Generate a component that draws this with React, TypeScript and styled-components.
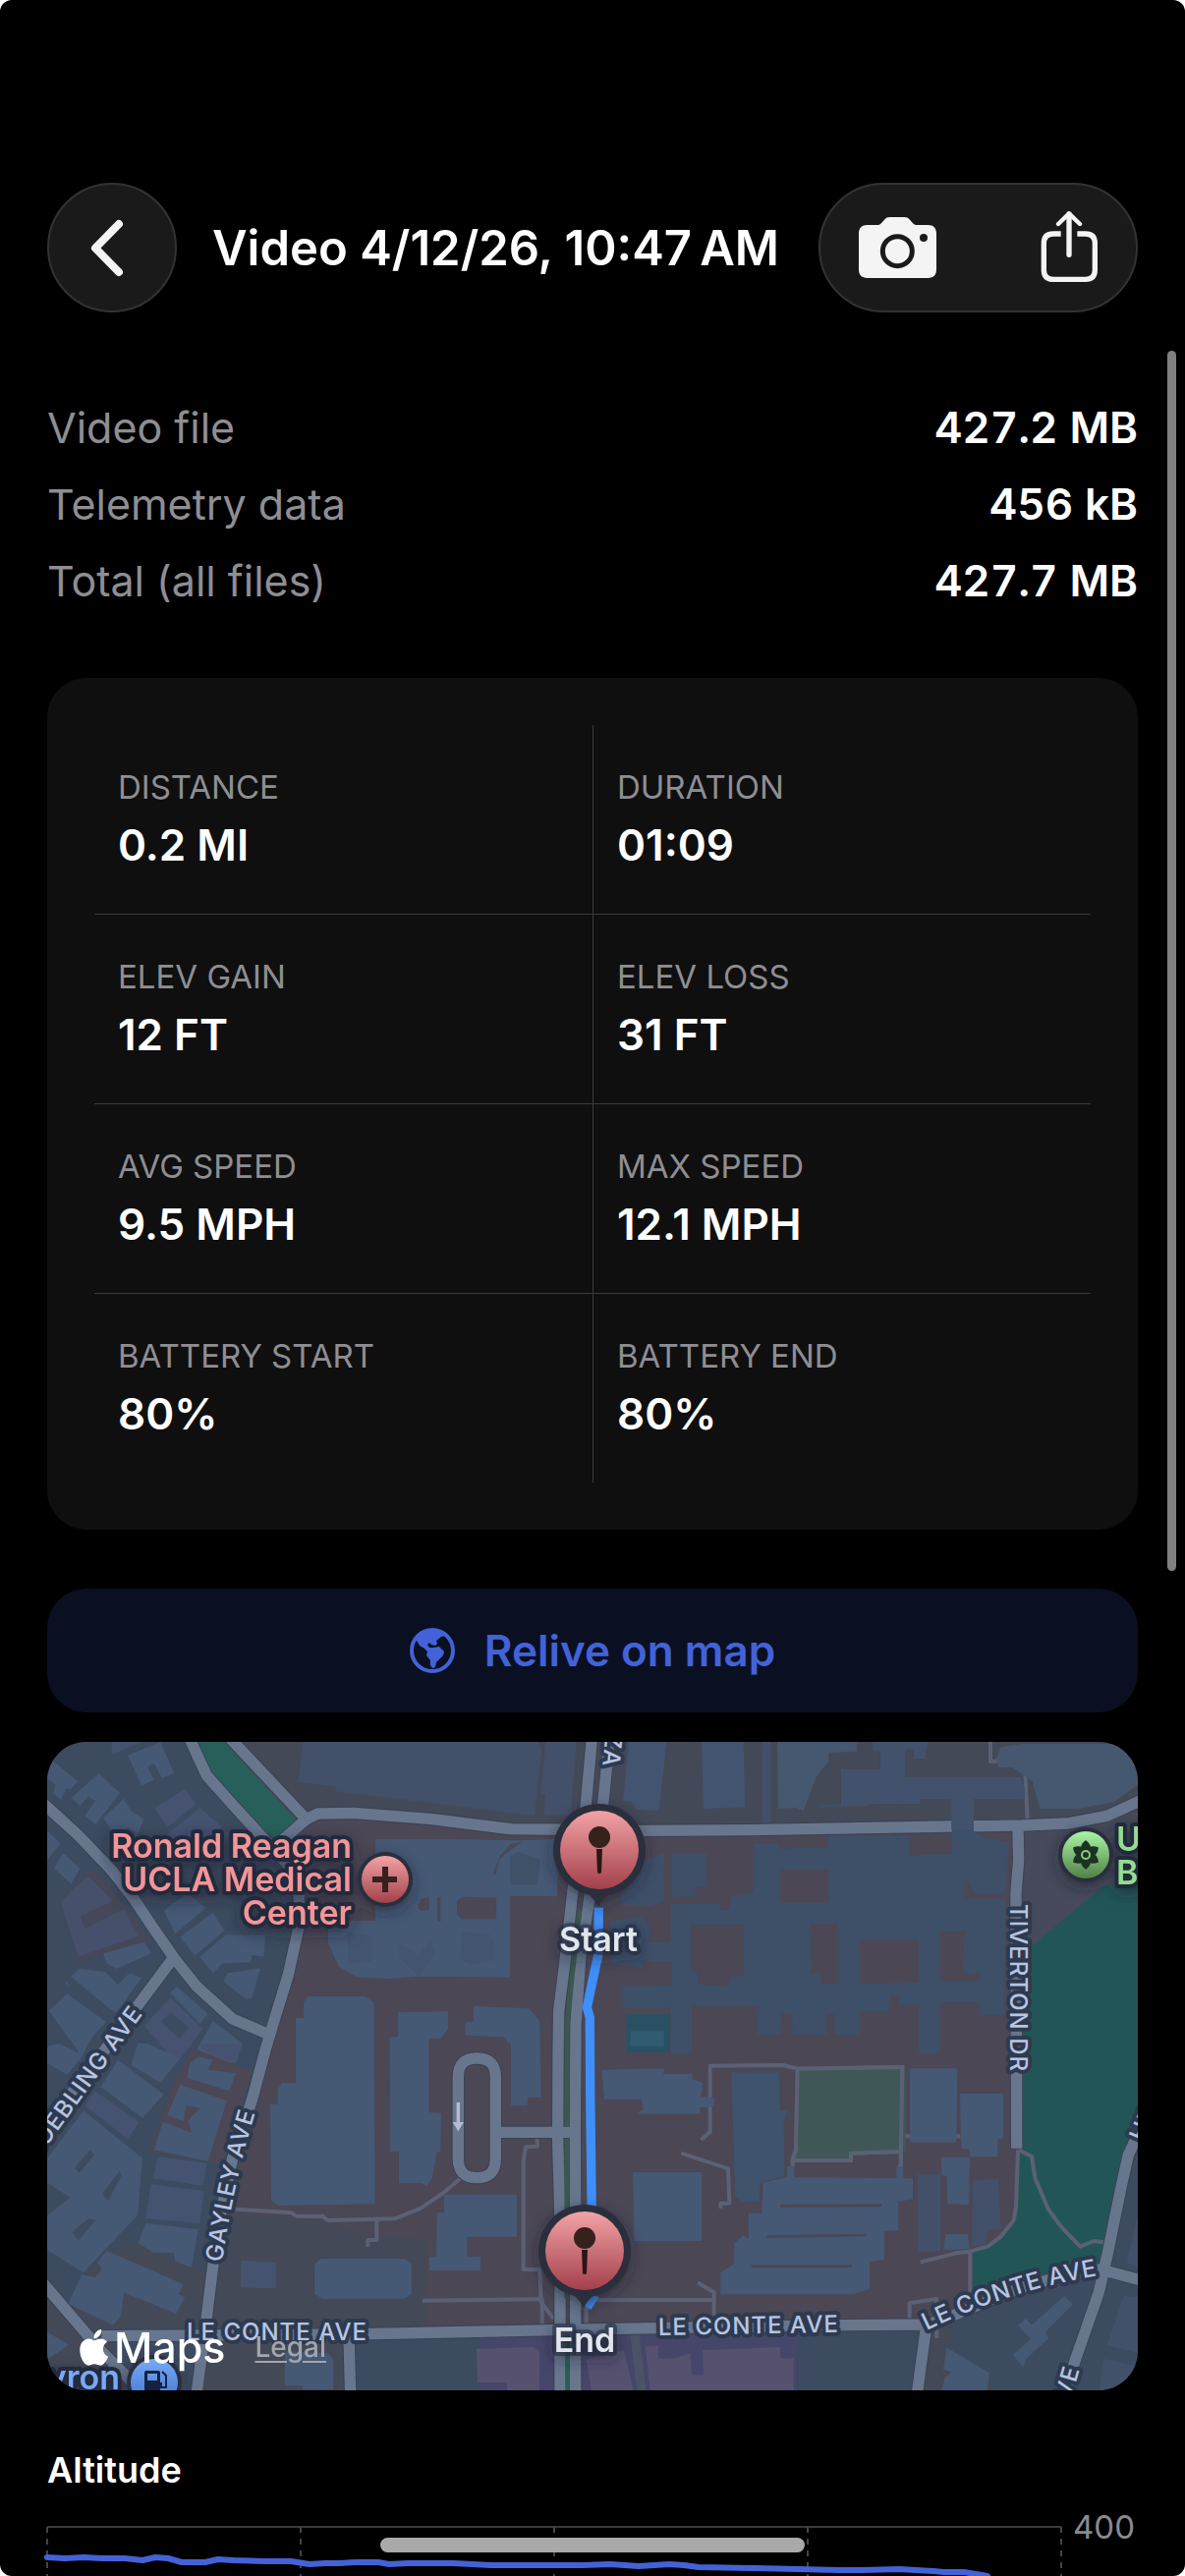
import React from "react";
import styled, { createGlobalStyle, css } from "styled-components";

const GlobalStyle = createGlobalStyle`
  *, *::before, *::after { box-sizing: border-box; }
  body {
    margin: 0;
    background: #fff;
    font-family: Inter, "Liberation Sans", sans-serif;
    color: #fff;
  }
`;

const Screen = styled.div`
  position: relative;
  height: 100vh;
  overflow: hidden;
  padding: 186px 48px 0;
  background: #000;
  border-radius: 12px;
`;

/* ---------- header ---------- */

const Header = styled.header`
  display: flex;
  align-items: center;
  margin-bottom: 78px;
`;

const glass = css`
  height: 132px;
  background: #1a1a1a;
  border: 2px solid #333335;
  border-radius: 66px;
`;

const BackButton = styled.button`
  ${glass}
  display: flex;
  align-items: center;
  justify-content: center;
  width: 132px;
  padding: 0;
  color: #f4f4f4;
`;

const Title = styled.h1`
  flex: 1;
  margin: 0;
  padding: 2px 4px 0 0;
  font-size: 49px;
  font-weight: 600;
  line-height: 60px;
  text-align: center;
  white-space: nowrap;
`;

const ActionGroup = styled.div`
  ${glass}
  display: flex;
  align-items: center;
  justify-content: space-between;
  width: 325px;
  padding: 0 39px;
`;

const IconButton = styled.button`
  display: flex;
  padding: 0;
  background: none;
  border: 0;
  color: #f4f4f4;
`;

/* ---------- file sizes ---------- */

const FileList = styled.dl`
  margin: 0 0 60px;
`;

const FileRow = styled.div`
  display: flex;
  align-items: center;
  justify-content: space-between;
  height: 78px;
  line-height: 56px;

  dt {
    color: #8e8e93;
    font-size: 43px;
  }

  dd {
    margin: 0;
    font-size: 44px;
    font-weight: 600;
    font-variant-numeric: tabular-nums;
  }
`;

/* ---------- stats ---------- */

const StatsCard = styled.section`
  margin-bottom: 60px;
  padding: 48px;
  background: #0f0f0f;
  border-radius: 40px;
`;

const StatsRow = styled.dl`
  display: grid;
  grid-template-columns: 1fr 1fr;
  margin: 0;

  & + & { border-top: 1px solid #3a3a3c; }
`;

const Stat = styled.div`
  display: flex;
  flex-direction: column;
  justify-content: center;
  gap: 12px;
  height: 192px;
  padding: 2px 24px 0;

  & + & { border-left: 1px solid #3a3a3c; }

  dt {
    color: #8e8e93;
    font-size: 33px;
    line-height: 38px;
  }

  dd {
    margin: 0;
    font-size: 44px;
    font-weight: 600;
    line-height: 56px;
  }
`;

/* ---------- relive ---------- */

const ReliveButton = styled.button`
  display: flex;
  align-items: center;
  justify-content: center;
  gap: 30px;
  width: 100%;
  height: 126px;
  margin-bottom: 30px;
  background: #0a1022;
  border: 0;
  border-radius: 40px;
  color: #4362d8;
  font-family: inherit;
  font-size: 44px;
  font-weight: 600;
`;

/* ---------- map ---------- */

const MapCard = styled.section`
  position: relative;
  height: 660px;
  margin-bottom: 57px;
  overflow: hidden;
  background: #4b4755;
  border-radius: 40px;
`;

const MapCanvas = styled.svg`
  display: block;
  width: 100%;
  height: 100%;
`;

const StreetName = styled.text`
  fill: #b8c4e2;
  stroke: #2d3a4f;
  stroke-width: 8px;
  stroke-linejoin: round;
  paint-order: stroke;
  font-size: 24px;
  font-weight: 500;
  letter-spacing: 1px;
`;

const PlaceName = styled.text<{ $color: string }>`
  fill: ${(p) => p.$color};
  stroke: #222b3d;
  stroke-width: 8px;
  stroke-linejoin: round;
  paint-order: stroke;
  font-size: 34px;
  font-weight: 600;
`;

const Attribution = styled.div`
  position: absolute;
  left: 33px;
  bottom: 18px;
  display: flex;
  align-items: center;
  gap: 6px;
`;

const MapsBrand = styled.span`
  margin-right: 24px;
  font-size: 43px;
  font-weight: 500;
  line-height: 52px;
`;

const LegalLink = styled.a`
  color: #a3a6ae;
  font-size: 28px;
  font-weight: 500;
  line-height: 32px;
  text-decoration: underline;
  text-underline-offset: 4px;
`;

/* ---------- altitude ---------- */

const SectionTitle = styled.h2`
  margin: 0 0 14px;
  font-size: 36px;
  font-weight: 600;
  line-height: 48px;
`;

const Chart = styled.div`
  display: grid;
  grid-template-columns: 1fr 78px;
`;

const Plot = styled.svg`
  display: block;
  width: 100%;
  overflow: visible;
`;

const AxisLabel = styled.span`
  padding-left: 12px;
  color: #8a8a8e;
  font-size: 33px;
  line-height: 40px;
`;

/* ---------- system overlays ---------- */

const ScrollThumb = styled.div`
  position: absolute;
  top: 357px;
  right: 9px;
  width: 9px;
  height: 1242px;
  background: #808080;
  border-radius: 5px;
`;

const HomeIndicator = styled.div`
  position: absolute;
  left: 50%;
  bottom: 24px;
  width: 432px;
  height: 15px;
  background: #a9a9a9;
  border-radius: 8px;
  transform: translateX(-50%);
`;

/* ---------- icons ---------- */

const ChevronLeft = () => (
  <svg width="128" height="128" viewBox="2 2 128 128" aria-hidden="true">
    <path d="M73 42 49 66.500l24 24.500" fill="none" stroke="currentColor" strokeWidth="8" strokeLinecap="round" strokeLinejoin="round" />
  </svg>
);

const Camera = () => (
  <svg width="79" height="62" viewBox="132 123 237 186" aria-hidden="true">
    <path
      fill="currentColor"
      d="M158 147h30c6 0 10-2 14-7l8-9c5-6 9-8 17-8h44c8 0 12 2 17 8l8 9c4 5 8 7 14 7h33c17 0 26 9 26 26v110c0 17-9 26-26 26H158c-17 0-26-9-26-26V173c0-17 9-26 26-26Z"
    />
    <circle cx="250" cy="227" r="45" fill="none" stroke="#1a1a1a" strokeWidth="15" />
    <circle cx="330" cy="186" r="12" fill="#1a1a1a" />
  </svg>
);

const Share = () => (
  <svg width="58" height="74" viewBox="686 105 174 222" aria-hidden="true">
    <g fill="none" stroke="currentColor" strokeWidth="16">
      <path d="M748 174h-23c-20 0-29 10-29 29v81c0 19 9 29 29 29h98c20 0 29-10 29-29v-81c0-19-9-29-29-29h-25" />
      <path d="M773 238V114" strokeLinecap="round" />
      <path d="m740 144 33-32 33 32" strokeWidth="13" strokeLinecap="round" strokeLinejoin="round" />
    </g>
  </svg>
);

const Globe = () => (
  <svg width="46" height="46" viewBox="0 0 46 46" aria-hidden="true">
    <circle cx="23" cy="23" r="21" fill="none" stroke="currentColor" strokeWidth="4" />
    <path
      fill="currentColor"
      d="M6 11 14 4 23 2l8 1 5 5-4 1-5 4 1 3-2 2-4-1-2-2-2 2 2 3 4 0 6-1 5 5-1 4-4 4-3 3-1 5-3 1-2-3 0-5-4-5 1-4-3-3-5-3Z"
    />
  </svg>
);

const AppleLogo = () => (
  <svg width="29" height="37" viewBox="122 850 87 113" aria-hidden="true">
    <path
      fill="#fff"
      d="M189 850c2 14-9 28-23 28-2-13 9-27 23-28Zm-22 34c6 0 12-5 21-5 8 0 15 4 19 10-19 12-16 38 3 46-6 15-16 27-24 27-7 0-10-4-19-4-8 0-11 4-18 4-13 0-27-25-27-48 0-23 14-35 28-35 8 0 13 5 17 5Z"
    />
  </svg>
);

/* ---------- map artwork ---------- */

const GROUND = "#4b4755";
const GREY = "#444957";
const BLOCK = "#3c4b60";
const HOUSE = "#455874";

/* Drawing units are a third of a pixel; tiles are offset inside that space. */
type Tile = { x: number; y: number; shapes: [string, string[]][] };

const regions: [string, string][] = [
  [GREY, "560,30 3360,30 3360,260 2988,300 1560,306 1200,275 960,256 820,270"],
  ["#464a5b", "3000,300 3360,250 3360,500 3005,720"],
  [BLOCK, "24,30 455,39 590,230 760,400 800,500 790,620 650,1130 550,1500 500,1840 24,1840"],
  [GREY, "540,1480 850,1500 990,1540 1180,1560 1180,1840 500,1850"],
  [GREY, "24,1740 310,2020 24,2020"],
  [BLOCK, "190,1850 500,1850 480,2020 310,2020"],
  [GREY, "500,1850 950,1850 950,2020 480,2020"],
  [BLOCK, "950,1850 1345,1845 1345,2020 950,2020"],
  ["#45466a", "1345,1845 2315,1835 2315,2020 1345,2020"],
  [BLOCK, "2315,1835 2700,1820 2690,2020 2315,2020"],
  [GREY, "2700,1830 2850,1780 2920,2020 2680,2020"],
  [BLOCK, "2790,1800 3240,1660 3140,2020 2920,2020 2880,1960 2780,1890"],
  [BLOCK, "3235,1680 3360,1690 3360,2020 3140,2020"],
  [BLOCK, "3360,1250 3262,1650 3360,1680"],
  ["#225656", "3255,478 3360,478 3360,1200 3310,1380 3260,1620 3250,1650 3100,1680 2850,1740 2850,1590 2895,1570 2935,1550 2975,1500 2990,1380 2990,1290 3005,1290 3005,670 3040,655 3170,545"],
  ["#27605b", "475,30 555,30 785,278 722,336 690,315 590,205 525,130"],
];

const tiles: Tile[] = [
  {
    x: 0,
    y: 0,
    shapes: [
      ["#444859", ["155,420 250,520 345,650 120,712 62,535"]],
      ["#47506a", ["150,450 225,525 125,570 140,610 258,550 302,632 118,695 66,530 95,495"]],
      [HOUSE, [
        "40,95 118,160 95,185 85,180 65,215 42,195 50,170 24,150 24,95",
        "182,135 246,195 172,292 138,265 170,220 150,205 125,235 98,210",
        "258,212 280,250 320,275 300,320 270,300 240,340 196,270",
        "270,80 370,39 412,135 375,150 350,105 330,115 350,155 312,172",
        "24,310 65,350 24,400",
        "72,378 125,425 97,473 45,425",
        "195,685 320,650 342,685 235,732 205,715",
        "380,555 450,500 510,545 415,625",
        "430,635 530,560 565,615 475,692",
        "570,628 690,630 685,695 650,690 645,712 560,715 530,745 490,695",
        "575,745 675,730 650,820 630,825 562,770",
        "120,732 200,740 240,780 275,745 312,760 235,865 78,775",
        "85,808 205,895 165,935 130,1000 30,860",
        "420,785 515,870 490,900 400,805",
        "530,890 620,960 600,1020 560,1015 480,980",
        "820,816 995,816 1022,835 1025,1450 730,1455 708,1440 705,1145 728,1145 728,1100 740,1080 783,1080 783,882 807,882 807,835",
      ]],
      ["#465270", ["220,39 310,39 222,78", "445,180 478,230 390,300 352,240", "490,240 560,300 430,390 380,330", "320,905 400,820 500,915 420,1020"]],
      [BLOCK, ["372,895 400,865 458,912 428,945", "78,768 90,750 210,850 190,870"]],
      ["#435069", ["805,39 1520,39 1535,65 1512,265 1200,226 905,190 905,175 790,162"]],
      ["#435069", ["1545,39 1640,39 1622,265 1540,262 1545,200 1530,200"]],
      [HOUSE, [
        "1026,336 1285,336 1470,340 1582,335 1582,510 1437,510 1437,758 1160,755 1070,762 970,758 915,725 882,655 882,585 1026,585",
        "1095,865 1248,862 1248,915 1225,945 1190,945 1190,1170 1227,1172 1225,1290 1213,1292 1200,1370 1182,1397 1168,1386 1098,1386 1098,1290 1072,1290 1070,940 1095,940",
        "1325,846 1495,853 1528,890 1532,1125 1490,1125 1490,1150 1440,1150 1440,965 1415,940 1300,935 1300,895 1325,893",
        "860,1617 1115,1617 1137,1632 1137,1725 1115,1739 865,1739 840,1725 840,1635",
      ]],
      [GROUND, ["1275,525 1295,512 1395,515 1395,580 1290,580 1275,565", "1384,443 1408,385 1440,350 1475,345 1430,375 1404,400 1394,443", "1155,545 1165,520 1190,512 1190,552 1165,555", "1215,512 1225,512 1225,588 1215,588"]],
      ["#3f5069", ["1437,390 1460,375 1530,400 1520,475 1437,475"]],
      ["#43546e", ["1290,620 1370,625 1388,645 1388,705 1320,718 1288,705", "940,620 1012,630 1012,710 945,715", "1100,655 1155,690 1195,645 1210,680 1160,755 1100,700"]],
    ],
  },
  {
    x: 1020,
    y: 0,
    shapes: [
      ["#435470", ["780,39 895,39 872,250 805,245 788,222 762,218", "1002,39 1130,39 1135,238 1008,243"]],
      ["#3e4f68", [
        "830,400 887,378 887,525 850,540 752,540 760,500",
        "912,378 1018,378 1018,480 980,482 980,512 912,513",
      ]],
      ["#2a5163", ["772,870 905,870 905,987 772,987"]],
      ["#305c73", ["785,922 887,922 887,968 785,968"]],
    ],
  },
  {
    x: 2160,
    y: 0,
    shapes: [
      ["#45586f", ["93,39 336,39 336,68 250,72 250,97 213,145 173,250 150,240 96,243", "775,55 838,45 1194,45 1194,170 1120,222 1015,243 895,243 872,160 812,117 768,117 762,90"]],
      ["#435069", ["47,39 73,39 73,285 47,285"]],
    ],
  },
  {
    x: 0,
    y: 960,
    shapes: [
      [GROUND, ["470,15 650,85 560,370 335,330 415,110"]],
      [GREY, ["205,632 300,610 510,700 480,870 160,870 90,790 135,700"]],
      [HOUSE, [
        "485,40 530,50 515,80 600,90 580,145 450,105 460,60",
        "430,125 573,175 515,360 350,325 378,238 465,272 445,240 390,220",
        "240,50 380,155 315,228 188,132",
        "135,205 315,350 300,525 200,630 135,700 24,630 24,525 95,470 24,425 24,350",
        "205,632 440,735 425,765 445,775 418,825 258,760 250,830 225,860 88,795 130,705 170,715 190,690 178,670",
        "325,548 485,568 465,685 415,665 410,640 348,638 302,610",
        "300,0 330,0 430,45 370,120 280,65",
        "24,10 60,0 135,35 85,95 24,60",
        "24,880 90,920 24,965",
        "750,940 880,945 898,965 898,1056 804,1056 804,1045 750,1045",
      ]],
      ["#455370", ["360,345 512,365 500,435 348,412", "340,430 503,450 490,550 325,535", "170,145 305,240 270,292 140,190", "615,663 723,668 723,748 615,745", "490,0 615,0 600,60 500,20"]],
      [GROUND, ["448,188 490,198 455,235 465,272 378,238 385,230 440,240"]],
      [BLOCK, ["155,325 168,340 122,395 108,380", "245,390 250,405 210,480 192,458", "150,535 172,540 120,600 100,575"]],
    ],
  },
  {
    x: 1020,
    y: 960,
    shapes: [
      [HOUSE, [
        "697,80 890,76 885,93 975,93 972,107 1007,120 1000,162 1040,165 1040,193 997,195 998,215 802,215 825,200 818,170 705,170",
        "792,393 1002,393 1002,603 796,603",
        "216,461 438,461 438,590 286,590 286,651 327,651 327,693 170,693 170,651 191,651 195,516 216,516",
      ]],
      ["#3f536c", ["1092,88 1238,88 1242,205 1265,205 1253,240 1255,405 1180,425 1178,483 1125,483 1105,465"]],
      ["#55516f", [
        "392,930 490,927 507,940 507,1060 408,1060 408,1035 318,1035 315,932",
        "650,965 765,935 795,1060 665,1060",
        "830,925 870,922 870,962 925,960 967,945 972,1012 1008,1012 1005,937 1242,927 1242,960 1283,962 1283,1060 845,1060",
      ]],
    ],
  },
  {
    x: 2160,
    y: 960,
    shapes: [
      ["#3f5857", ["155,77 485,77 485,330 318,335 318,357 148,352 155,300"]],
      [HOUSE, [
        "50,425 120,408 507,412 507,475 463,483 463,570 420,573 420,660 375,667 375,750 325,766 -80,766 -80,700 -38,672 -38,610 -10,585 5,597 5,518 45,518",
        "498,76 643,76 640,302 498,302",
        "651,153 784,153 784,290 767,292 765,346 680,346 680,322 655,322",
        "593,347 681,347 678,492 613,490 610,405 595,402",
        "607,582 675,582 680,628 600,630",
        "123,375 145,375 145,410 123,410",
        "457,372 478,372 478,414 457,414",
        "610,928 740,1005 735,1060 595,1060 605,1020 625,1003 600,995",
        "970,770 995,797 912,880 922,900 850,965 845,990 812,950 868,902 827,860 852,840 870,860",
      ]],
      ["#435069", ["522,400 592,400 592,635 522,635", "690,417 768,413 776,568 732,570 730,618 688,618", "1150,770 1194,775 1194,945 1100,922", "1090,962 1194,985 1194,1060 1075,1060", "1194,520 1194,680 1160,670"]],
      [GROUND, ["103,491 411,490 411,499 103,501", "60,586 365,581 365,589 60,594", "14,676 320,676 320,684 14,684"]],
    ],
  },
];

const campusBuilding =
  "1745,585 1840,572 1863,600 1860,650 1928,652 1928,533 2077,533 2080,552 2102,555 2115,510 2180,498 2180,350 2258,350 2260,365 2410,360 2410,325 2655,325 2655,385 2787,382 2785,230 2688,213 2530,230 2520,230 2390,230 2370,240 2448,240 2448,123 2568,123 2568,68 2545,62 2545,39 2713,39 2705,90 2670,90 2670,62 2643,62 2643,147 2995,147 3008,180 3008,213 2853,213 2853,310 2880,330 2960,345 2948,502 2855,502 2825,450 2825,518 2950,518 2945,873 2870,873 2870,833 2750,833 2750,993 2685,993 2685,842 2625,842 2625,817 2597,817 2597,862 2506,862 2506,933 2430,933 2428,870 2405,870 2403,933 2300,933 2298,870 2265,870 2263,933 2190,933 2195,845 1992,845 1992,993 1928,993 1928,850 1780,850 1780,785 1930,783 1930,710 1840,710 1840,730 1745,715";

const courtyards = [
  "2262,430 2410,430 2410,530 2262,530",
  "2353,595 2438,595 2438,778 2388,778 2388,745 2358,745",
  "2506,643 2685,643 2685,773 2506,778",
  "2750,618 2832,618 2822,645 2820,745 2870,748 2870,770 2750,770",
  "1990,598 2150,598 2150,753 2105,755 2105,785 2010,778 2010,738 1990,738",
];

const roads = [
  "M10 225 120 325 220 430 290 520 350 610 412 700 480 785 590 885 695 930",
  "M408 700 300 845 200 980 100 1110 10 1240",
  "M455 20 510 140 590 230 690 340 765 420 793 500 793 600 760 750 720 880 690 980 650 1130 590 1310 550 1500 530 1640 508 1820 480 2030",
  "M575 20 815 275 735 345",
  "M810 278 850 258 960 256 1200 275 1440 305 1560 306 1850 310 2160 308 2784 297 3000 294 3140 288 3260 265 3370 215",
  "M1688 20 1668 240 1628 500 1606 700 1586 860 1584 1000 1583 1260 1590 1500 1590 2030",
  "M1742 20 1722 220 1682 500 1652 700 1638 900 1636 1230 1637 1500 1637 2030",
  "M190 1853 950 1848 1570 1835 1880 1829 2460 1820 2715 1818 2790 1790 3000 1705 3150 1662 3230 1650 3260 1655 3370 1685",
  "M2707 1830 2680 2030",
  "M3360 1225 3325 1300 3305 1390 3262 1600 3235 1720 3165 1920 3130 2030",
  "M2988 300 2990 400 2982 500 2984 1280",
  "M945 1850 950 2030",
  "M10 1690 190 1900 270 1980 320 2040",
  "M1410 1231 1640 1231",
];

const oval = "M1279 1062c0-40 20-57 57-57s57 17 57 57v250c0 40-20 58-57 58s-57-18-57-58Z";

const footpaths = [
  "M585 1465 770 1477 785 1487 865 1487 880 1500 1085 1495 1165 1463 1235 1415 1290 1368",
  "M1030 1500V1560H1003V1580",
  "M1520 1250V1274L1485 1276 1478 1320V1650H1528L1532 1750 1570 1800",
  "M1170 1745 1528 1741M1535 1740V1830M1670 1740V1830M1700 1743H2060M2010 1690 2060 1720V1790",
  "M2020 1255 2048 1230V1028L2270 1026 2315 1037 2635 1032 2630 1335M2315 1037 2310 1285 2300 1310V1335M2300 1317H2478V1295L2630 1290",
  "M1960 1295 2103 1342 2107 1448H2080V1463",
  "M2990 1285 3030 1305 3040 1370 3080 1465 3120 1520 3178 1580 3220 1563 3250 1567",
  "M2988 1285 2982 1460 2975 1500 2935 1550 2895 1580 2840 1595 2800 1600 2690 1628M2842 1600V1730M2657 1800V1753L2740 1740V1860",
  "M2904 30V98H2980L3010 125 3017 280",
  "M2635 1243H2660M2798 1243H2812",
];

const streets = [
  { id: "gayley", name: "GAYLEY AVE", d: "M178 530Q190 446 214 370" },
  { id: "conte-east", name: "LE CONTE AVE", d: "M895 599Q983 556 1082 541" },
];

const Pin = ({ x, y }: { x: number; y: number }) => (
  <g transform={`translate(${x} ${y})`}>
    <path d="M-22 39Q-6 46-1 58 4 46 22 39Z" fill="#2b2f3d" />
    <circle r="47" fill="#2b2f3d" />
    <circle r="40" fill="url(#pinRed)" />
    <circle cy="-13" r="11" fill="#35201f" />
    <path d="M-3-1H3L2 23Q0 25-2 23Z" fill="#2a1719" />
  </g>
);

const MapArt = () => (
  <MapCanvas viewBox="0 0 1110 660" preserveAspectRatio="xMidYMid slice" role="img" aria-label="Route map">
    <defs>
      <linearGradient id="pinRed" x1="0" y1="0" x2="0" y2="1">
        <stop offset="0" stopColor="#f2a3a5" />
        <stop offset="1" stopColor="#a3404b" />
      </linearGradient>
      <linearGradient id="pinGreen" x1="0" y1="0" x2="0" y2="1">
        <stop offset="0" stopColor="#aaf5a3" />
        <stop offset="1" stopColor="#4f8148" />
      </linearGradient>
      <linearGradient id="pinBlue" x1="0" y1="0" x2="0" y2="1">
        <stop offset="0" stopColor="#77a9f8" />
        <stop offset="1" stopColor="#4070cc" />
      </linearGradient>
      <filter id="shade" x="-50%" y="-50%" width="200%" height="200%">
        <feDropShadow dx="0" dy="5" stdDeviation="7" floodColor="#1d2230" floodOpacity="0.55" />
      </filter>
      {streets.map((s) => (
        <path key={s.id} id={s.id} d={s.d} />
      ))}
    </defs>

    <g transform="translate(-8 -13) scale(0.333333)">
      {regions.map(([fill, points], i) => (
        <polygon key={i} fill={fill} points={points} />
      ))}
      <g fill="none" strokeLinejoin="round" stroke="#5b6175" strokeWidth="12">
        {footpaths.map((d) => (
          <path key={d} d={d} />
        ))}
      </g>
      {tiles.map((t) => (
        <g key={`${t.x}-${t.y}`} transform={`translate(${t.x} ${t.y})`}>
          {t.shapes.map(([fill, list]) =>
            list.map((points) => <polygon key={points} fill={fill} points={points} />)
          )}
        </g>
      ))}
      <path d="M2315 1037 2635 1032 2630 1335M2315 1037 2310 1285 2300 1317H2478V1295L2630 1290" fill="none" stroke="#5b6175" strokeWidth="12" />
      <path d="M1816 1830 1840 2030" stroke="#4c5366" strokeWidth="28" />
      <g fill="none" strokeLinejoin="round">
        <g stroke="#3a4153" strokeWidth="40">
          {roads.map((d) => (
            <path key={d} d={d} />
          ))}
          <path d={oval} />
        </g>
        <g stroke="#67768d" strokeWidth="34">
          {roads.map((d) => (
            <path key={d} d={d} />
          ))}
          <path d={oval} />
        </g>
        <path d="M1650 550 1628 740 1612 900 1611 1212M1611 1250V1740" stroke="#3b574f" strokeWidth="15" />
        <path d="M1613 1850V2030" stroke="#27604f" strokeWidth="14" />
      </g>
      <polygon points={campusBuilding} fill="#3e4f68" />
      <polygon points="2448,123 2568,123 2568,68 2545,62 2545,39 2713,39 2705,90 2670,90 2670,62 2643,62 2643,147 2995,147 3008,180 3008,213 2853,213 2853,308 2785,308 2785,213 2688,213 2688,228 2535,228 2515,240 2448,240" fill="#43526c" />
      <polygon points="2370,238 2448,238 2448,241 2515,241 2535,229 2688,229 2688,214 2785,214 2785,229" fill={GREY} />
      {courtyards.map((points) => (
        <polygon key={points} points={points} fill={GROUND} />
      ))}
      <path d="M1274 1140h10v60h12l-17 28-17-28h12Z" fill="#b4bdd3" />
      <path d="M1708 545 1706 690 1672 850 1681 880 1682 1100 1687 1500M1697 1728 1672 1765" fill="none" stroke="#3f8ff9" strokeWidth="28" />
    </g>

    <g>
      {streets.map((s) => (
        <StreetName key={s.id}>
          <textPath href={`#${s.id}`}>{s.name}</textPath>
        </StreetName>
      ))}
      <StreetName x="142" y="609">LE CONTE AVE</StreetName>
      <StreetName transform="translate(622 604) rotate(-1)">LE CONTE AVE</StreetName>
      <StreetName transform="translate(98 276) rotate(-54)" textAnchor="end">ROEBLING AVE</StreetName>
      <StreetName transform="translate(980 165) rotate(90)">TIVERTON DR</StreetName>
      <StreetName transform="translate(565 25) rotate(96)" textAnchor="end">PLAZA</StreetName>
      <StreetName transform="translate(1116 408) rotate(-66)">HILGARD AVE</StreetName>
      <StreetName transform="translate(1051 638) rotate(-74)" textAnchor="end">AVE</StreetName>
    </g>

    <g filter="url(#shade)">
      <PlaceName $color="#f39497" textAnchor="end">
        <tspan x="310" y="118">Ronald Reagan</tspan>
        <tspan x="310" y="152">UCLA Medical</tspan>
        <tspan x="310" y="186">Center</tspan>
      </PlaceName>
      <circle cx="344" cy="140" r="28" fill="#2b2f3d" />
      <circle cx="344" cy="140" r="24" fill="url(#pinRed)" />
      <path d="M341 127h6v10h9v6h-9v10h-6v-10h-10v-6h10Z" fill="#35201f" />

      <PlaceName $color="#94dc8f">
        <tspan x="1088" y="111">UCLA</tspan>
        <tspan x="1088" y="145">Botanical</tspan>
      </PlaceName>
      <circle cx="1057" cy="115" r="28" fill="#2b2f3d" />
      <circle cx="1057" cy="115" r="24" fill="url(#pinGreen)" />
      <g transform="translate(1057 115)">
        {[0, 60, 120, 180, 240, 300].map((a) => (
          <path key={a} d="M0-15Q8-9 3-3H-3Q-8-9 0-15Z" fill="#1f3320" transform={`rotate(${a})`} />
        ))}
        <circle r="5" fill="#86cc7e" />
        <circle r="3" fill="#1f3320" />
      </g>

      <PlaceName $color="#78a8f6" x="74" y="659" textAnchor="end">Chevron</PlaceName>
      <circle cx="109" cy="652" r="28" fill="#2b2f3d" />
      <circle cx="109" cy="652" r="24" fill="url(#pinBlue)" />
      <path d="M99 642q0-2 2-2h12q2 0 2 2v22H99Zm3 1v7h10v-7Z" fill="#14233f" fillRule="evenodd" />
      <path d="M116 652v5h5v-12l-4-4" fill="none" stroke="#14233f" strokeWidth="2" />
    </g>

    <g filter="url(#shade)">
      <Pin x={562} y={110} />
      <Pin x={547} y={518} />
      <PlaceName $color="#e1e5ec" x="561" y="213" textAnchor="middle" strokeOpacity="0.6">Start</PlaceName>
      <PlaceName $color="#e1e5ec" x="547" y="621" textAnchor="middle" strokeOpacity="0.6">End</PlaceName>
    </g>
  </MapCanvas>
);

/* ---------- data ---------- */

const files = [
  { label: "Video file", size: "427.2 MB" },
  { label: "Telemetry data", size: "456 kB" },
  { label: "Total (all files)", size: "427.7 MB" },
];

const stats = [
  [["DISTANCE", "0.2 MI"], ["DURATION", "01:09"]],
  [["ELEV GAIN", "12 FT"], ["ELEV LOSS", "31 FT"]],
  [["AVG SPEED", "9.5 MPH"], ["MAX SPEED", "12.1 MPH"]],
  [["BATTERY START", "80%"], ["BATTERY END", "80%"]],
];

const altitude =
  "0,51 18,52 37,51 56,52 79,52 97,54 110,51 123,52 137,56 161,56 174,53 190,54 221,55 248,55 267,58 283,57 298,57 313,56 337,56 348,58 367,57 413,57 452,59 544,59 573,58 602,60 633,58 648,59 663,61 721,62 806,64 829,64 867,63 902,65 913,66 933,66 957,70";

export default function App() {
  return (
    <>
      <GlobalStyle />
      <Screen>
        <Header>
          <BackButton aria-label="Back">
            <ChevronLeft />
          </BackButton>
          <Title>Video 4/12/26, 10:47{"\u202f"}AM</Title>
          <ActionGroup>
            <IconButton aria-label="Camera">
              <Camera />
            </IconButton>
            <IconButton aria-label="Share">
              <Share />
            </IconButton>
          </ActionGroup>
        </Header>

        <FileList>
          {files.map((f) => (
            <FileRow key={f.label}>
              <dt>{f.label}</dt>
              <dd>{f.size}</dd>
            </FileRow>
          ))}
        </FileList>

        <StatsCard>
          {stats.map((row) => (
            <StatsRow key={row[0][0]}>
              {row.map(([label, value]) => (
                <Stat key={label}>
                  <dt>{label}</dt>
                  <dd>{value}</dd>
                </Stat>
              ))}
            </StatsRow>
          ))}
        </StatsCard>

        <ReliveButton>
          <Globe />
          Relive on map
        </ReliveButton>

        <MapCard>
          <MapArt />
          <Attribution>
            <AppleLogo />
            <MapsBrand>Maps</MapsBrand>
            <LegalLink href="#legal">Legal</LegalLink>
          </Attribution>
        </MapCard>

        <SectionTitle>Altitude</SectionTitle>
        <Chart>
          <Plot viewBox="0 0 1032 300" role="img" aria-label="Altitude chart">
            <path d="M0 20H1032" stroke="#3a3a3a" strokeWidth="2" />
            {[0, 258, 516, 774, 1032].map((x) => (
              <path key={x} d={`M${x} 20V300`} stroke="#444" strokeWidth="2" strokeDasharray="6 6" />
            ))}
            <polyline points={altitude} fill="none" stroke="#4362d8" strokeWidth="6" strokeLinecap="round" strokeLinejoin="round" />
          </Plot>
          <AxisLabel>400</AxisLabel>
        </Chart>

        <ScrollThumb />
        <HomeIndicator />
      </Screen>
    </>
  );
}
